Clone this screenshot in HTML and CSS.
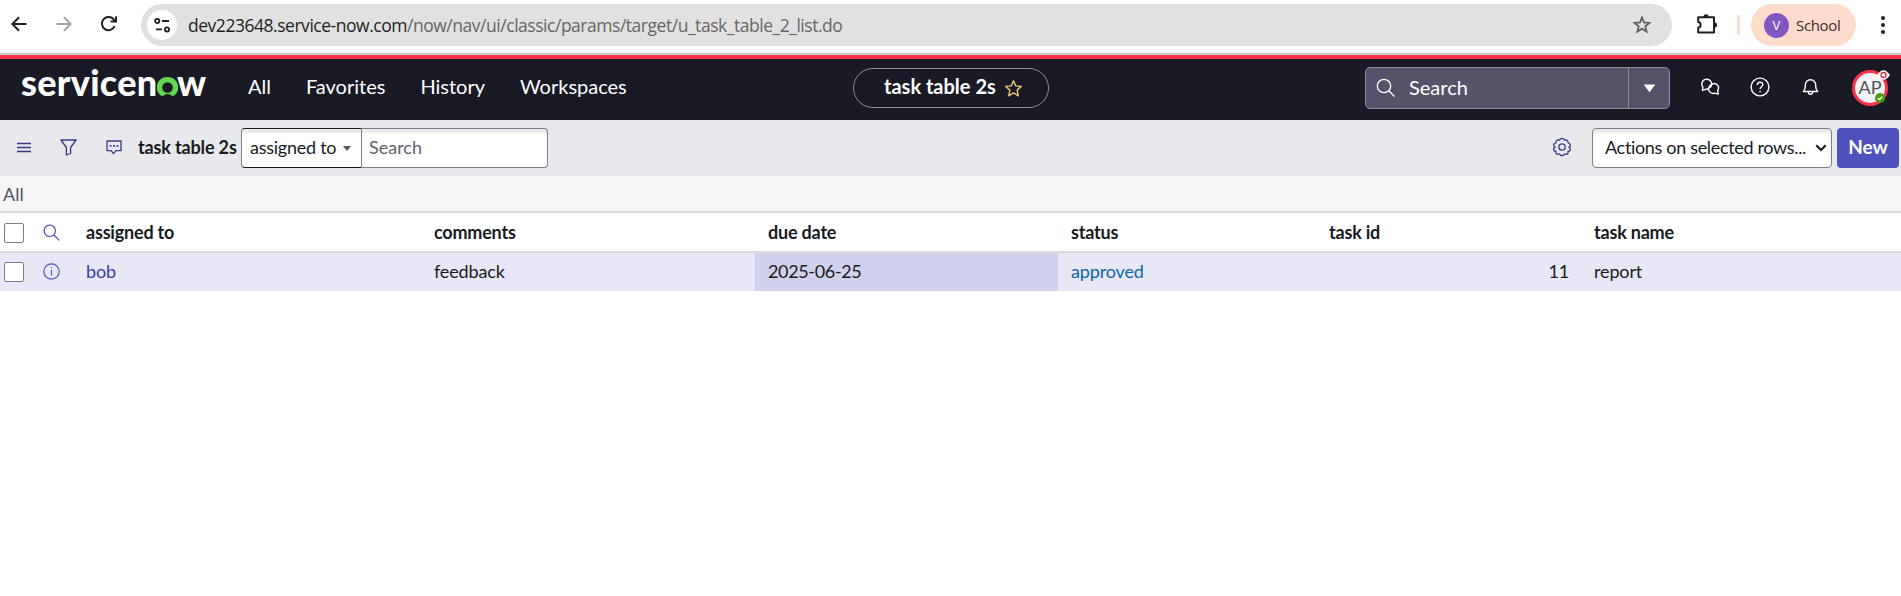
FILE: index.html
```html
<!DOCTYPE html>
<html lang="en">
<head>
<meta charset="utf-8">
<title>task table 2s | ServiceNow</title>
<link rel="stylesheet" href="styles.css">
</head>
<body>
<div class="browser">
  <div class="nav-buttons">
    <svg width="16" height="16" viewBox="0 0 16 16"><path d="M15.5 8H1.5M8 1.3 1.3 8 8 14.7" stroke="#1f1f1f"/></svg>
    <svg width="16" height="16" viewBox="0 0 16 16"><path d="M.5 8h14M8 1.3 14.7 8 8 14.7" stroke="#a3a3a3"/></svg>
    <svg width="16" height="16" viewBox="0 0 16 16"><path d="M13.6 10.2A6.6 6.6 0 1 1 12.7 3.4L14.6 5.4M15 .5V5.6H9.6" stroke="#1f1f1f"/></svg>
  </div>
  <div class="address">
    <span class="site-info"><svg width="17" height="17" viewBox="0 0 17 17"><circle cx="3.2" cy="4" r="2.1"/><path d="M8 4h7M2 12.4h6"/><circle cx="13" cy="12.4" r="2.1"/></svg></span>
    <span class="url">dev223648.service-now.com<span class="path">/now/nav/ui/classic/params/target/u_task_table_2_list.do</span></span>
    <svg class="bookmark" width="20" height="20" viewBox="0 0 20 20"><path d="M10 2.6l2 4.9 5.4.4-4.1 3.5 1.3 5.2-4.6-2.8-4.6 2.8 1.3-5.2L2.6 7.9 8 7.5z"/></svg>
  </div>
  <svg class="puzzle" width="22" height="22" viewBox="0 0 22 22"><path d="M2.200 4.200H18v15.200H2.200v-4.700c3.200-.6 3.200-5 0-5.600V4.200z"/><path class="solid" d="M7.400 4.200a2.700 3 0 0 1 5.400 0zM18 9.200a3 2.700 0 0 1 0 5.400z"/></svg>
  <span class="divider"></span>
  <div class="profile"><span class="initial">V</span><span class="profile-name">School</span></div>
  <svg class="kebab" width="6" height="20" viewBox="0 0 6 20"><circle cx="3" cy="3" r="2"/><circle cx="3" cy="10" r="2"/><circle cx="3" cy="17" r="2"/></svg>
</div>
<header class="header">
  <div class="logo"><span class="logo-a">servicen</span><svg width="21" height="20" viewBox="0 0 21 20"><path d="M10.500 0A10.400 10.400 0 0 0 3.400 18.200Q5.200 19.600 7 18.300Q10.500 15.800 14 18.300Q15.800 19.600 17.600 18.200A10.400 10.400 0 0 0 10.500 0zM10.500 5.200a5.300 5.300 0 1 1 0 10.600a5.300 5.300 0 0 1 0-10.600z" fill="#62d84e" fill-rule="evenodd"/></svg><span class="logo-b">w</span></div>
  <nav class="menu"><a>All</a><a>Favorites</a><a>History</a><a>Workspaces</a></nav>
  <div class="title-pill"><span>task table 2s</span><svg width="19" height="19" viewBox="0 0 19 19"><path d="M9.500 1.800l2.200 5.100 5.600.5-4.200 3.700 1.200 5.700-4.800-2.900-4.800 2.900 1.200-5.700L1.700 7.400l5.600-.5z"/></svg></div>
  <div class="global-search">
    <div class="gs-field"><svg width="20" height="20" viewBox="0 0 20 20"><circle cx="8" cy="8" r="6.700"/><path d="M12.800 12.800l5.700 5.700"/></svg><span>Search</span></div>
    <div class="gs-toggle"><svg width="13" height="9" viewBox="0 0 13 9"><path d="M.7.500h11.600L6.500 8.300z"/></svg></div>
  </div>
  <div class="header-icons">
    <svg width="19" height="18" viewBox="0 0 19 18"><path d="M8.600 10A4.900 4.900 0 1 0 1.800 9L1.500 12.300 4.700 11.300 8 10.600M11 6.200a4.300 4.300 0 0 1 5.700 6.200l.5 3.700-3.500-1a4.500 4.500 0 0 1-5.600-6.300Q9 7 11 6.200"/></svg>
    <svg width="20" height="20" viewBox="0 0 20 20"><circle cx="10" cy="10" r="8.900"/><path d="M7.300 8c0-3.700 5.500-3.700 5.500-.2 0 2-2.700 2-2.700 4.300M10.100 13.700v1.500"/></svg>
    <svg width="17" height="18" viewBox="0 0 17 18"><path d="M1.300 13.500Q3.300 11.500 3.300 8.200V7a5.200 5.200 0 0 1 10.400 0v1.200q0 3.300 2 5.300zM6.200 14c.4 3 4.200 3 4.600 0"/></svg>
  </div>
  <div class="avatar"><span>AP</span>
    <svg class="eye" width="13" height="10" viewBox="0 0 13 10"><path d="M0 5Q6.500-4.500 13 5Q6.500 14.500 0 5z" fill="#fff"/><circle cx="6.500" cy="5" r="2.500" fill="#fff" stroke="#d9213b" stroke-width="1.300"/></svg>
    <svg class="online" width="10" height="10" viewBox="0 0 10 10"><circle cx="5" cy="5" r="5" fill="#4a9e0b"/><path d="M2.800 5.200l1.600 1.500 2.800-3" fill="none" stroke="#fff" stroke-width="1.300"/></svg>
  </div>
</header>
<div class="toolbar">
  <div class="tool-icons">
    <svg width="14" height="11" viewBox="0 0 14 11"><path d="M0 1.500h14M0 5.500h14M0 9.500h14"/></svg>
    <svg width="17" height="17" viewBox="0 0 17 17"><path d="M.9 1h15.200L10.600 8.500v6L6.400 16V8.500z"/></svg>
    <svg width="16" height="15" viewBox="0 0 16 15"><path d="M1 1h14v9.700H10L7.500 13.600 5 10.700H1z"/><path class="dots" d="M3.700 5.900h1.800M7.100 5.900h1.800M10.500 5.900h1.800"/></svg>
  </div>
  <h1>task table 2s</h1>
  <div class="list-search"><div class="field-select"><span>assigned to</span><i></i></div><div class="search-box"><span>Search</span></div></div>
  <svg class="gear" width="20" height="20" viewBox="0 0 20 20"><circle cx="10" cy="10" r="3.200"/><path d="M8.300 2q1.700-1.300 3.400 0l.6 1q1-.1 2-.1 1.800.7 1.900 2.700l-.1.200q.9.800 1.900 1.200.7 1.500-.1 2.500l-.9.700.9.700q.8 1.500 0 2.700-.9.500-1.900 1 .1.900-.1 1.900-1 .9-2.300.7l-1.300-.1-.7 1q-1.600 1-3.200 0l-.7-1-1.300.1q-1.300.2-2.300-.7-.2-1-.1-1.900-1-.5-1.900-1-.8-1.200 0-2.700l.9-.7-.9-.7q-.8-1-.1-2.500 1-.4 1.900-1.200L3.800 5.600q.1-2 1.900-2.700 1 0 2 .1z"/></svg>
  <div class="actions"><span>Actions on selected rows...</span><svg width="12" height="8" viewBox="0 0 12 8"><path d="M1.300 1.300 6 6l4.700-4.700"/></svg></div>
  <button class="new">New</button>
</div>
<div class="crumbs"><span>All</span></div>
<div class="row head">
  <div class="tools"><i class="check"></i><svg width="17" height="17" viewBox="0 0 17 17"><circle cx="6.800" cy="6.800" r="5.700"/><path d="M11 11l5.300 5.300"/></svg></div>
  <div class="c1">assigned to</div><div class="c2">comments</div><div class="c3">due date</div><div class="c4">status</div><div class="c5">task id</div><div class="c6">task name</div>
</div>
<div class="row data">
  <div class="tools"><i class="check"></i><svg width="17" height="17" viewBox="0 0 17 17"><circle cx="8.500" cy="8.500" r="7.700"/><path d="M8.500 7v5.500M8.500 4.200v1.400"/></svg></div>
  <div class="c1">bob</div><div class="c2">feedback</div><div class="c3 hot">2025-06-25</div><div class="c4 link">approved</div><div class="c5 num">11</div><div class="c6">report</div>
</div>
</body>
</html>
```
FILE: styles.css
```css
* { box-sizing: border-box; }
body { margin: 0; background: #fff; color: #181a1f; font: 18px Lato, sans-serif; white-space: nowrap; overflow: hidden; }
svg { display: block; flex: none; fill: none; }

.browser { height: 55px; display: flex; align-items: flex-start; border-bottom: 2px solid #c8c8c8; font-family: "Open Sans", sans-serif; }
.nav-buttons { display: flex; gap: 29px; padding: 16px 0 0 11px; width: 141px; }
.nav-buttons svg { stroke-width: 2; }
.address { width: 1531px; height: 42px; margin-top: 4px; border-radius: 21px; background: #e1e1e1; display: flex; align-items: center; padding-left: 6px; }
.site-info { width: 30px; height: 30px; border-radius: 50%; background: #fff; display: flex; align-items: center; justify-content: center; }
.site-info svg { stroke: #1f1f1f; stroke-width: 1.8; }
.url { margin-left: 11px; font-size: 17.5px; letter-spacing: -0.47px; color: #1f1f1f; width: 1445px; }
.path { color: #666; }
.bookmark { stroke: #5f5f5f; stroke-width: 1.8; margin-left: -1px; }
.puzzle { margin: 13px 0 0 24px; stroke: #1f1f1f; stroke-width: 2; stroke-linejoin: round; }
.puzzle .solid { fill: #1f1f1f; stroke: none; }
.divider { width: 3px; height: 20px; background: #fddccb; margin: 15px 0 0 19px; border-radius: 1px; }
.profile { width: 105px; height: 42px; margin: 4px 0 0 11px; border-radius: 21px; background: #fddccb; display: flex; align-items: center; padding-left: 13px; }
.initial { width: 25px; height: 25px; border-radius: 50%; background: #8056c0; color: #fff; font-size: 13px; line-height: 25px; text-align: center; }
.profile-name { margin-left: 7px; font-size: 15px; letter-spacing: -0.35px; color: #3a2c28; padding-bottom: 1px; }
.kebab { margin: 15px 0 0 24px; fill: #1f1f1f; }

.header { height: 65px; border-top: 4px solid #ff3349; background: #1a1926; color: #fff; display: flex; align-items: flex-start; }
.logo { display: flex; width: 227px; padding-left: 21px; height: 45px; font-size: 36px; line-height: 47px; font-weight: 900; }
.logo-a { width: 136px; letter-spacing: 0.3px; }
.logo svg { margin-top: 18px; }
.logo-b { margin-left: -1px; }
.menu { display: flex; gap: 35px; padding-left: 21px; width: 626px; font-size: 20px; line-height: 55px; }
.title-pill { width: 196px; height: 40px; margin-top: 9px; border: 1px solid #8d8c99; border-radius: 20px; display: flex; align-items: center; padding-left: 30px; font-size: 20px; font-weight: 700; }
.title-pill span { width: 120px; padding-bottom: 4px; }
.title-pill svg { stroke: #e8c37c; stroke-width: 1.4; stroke-linejoin: round; }
.global-search { width: 305px; height: 42px; margin: 8px 0 0 316px; border: 1px solid #8d8c99; border-radius: 5px; background: #55526a; display: flex; }
.gs-field { width: 263px; display: flex; align-items: center; gap: 13px; padding-left: 10px; font-size: 20px; border-right: 1px solid #8d8c99; }
.gs-field span { padding-bottom: 3px; }
.gs-field svg { stroke: #fff; stroke-width: 1.3; }
.gs-toggle { flex: 1; display: flex; align-items: center; justify-content: center; }
.gs-toggle svg { fill: #fff; }
.header-icons { display: flex; align-items: center; gap: 30px; margin: 18px 0 0 31px; height: 20px; }
.header-icons svg { stroke: #fff; stroke-width: 1.4; stroke-linejoin: round; }
.header-icons svg:last-child { margin-left: 2px; }
.avatar { position: relative; width: 36px; height: 36px; margin: 11px 0 0 33px; border: 3px solid #ff3349; border-radius: 50%; background: #f4f4f7; color: #50525d; font-size: 18px; line-height: 29px; text-align: center; }
.eye { position: absolute; right: -5px; top: -3px; }
.online { position: absolute; right: 0; bottom: 0; }

.toolbar { height: 56px; background: #e8e9ed; display: flex; align-items: flex-start; padding-top: 8px; }
.tool-icons { display: flex; align-items: center; gap: 29px; height: 39px; width: 138px; padding-left: 17px; stroke: #3a3786; stroke-width: 1.3; }
.tool-icons svg { stroke-linejoin: round; }
.tool-icons .dots { stroke-width: 1.8; }
h1 { margin: 0; width: 103px; font-size: 18px; line-height: 39px; font-weight: 700; letter-spacing: -0.15px; }
.list-search { display: flex; height: 40px; width: 1311px; }
.field-select { width: 121px; border: 1px solid #181a1f; border-left-color: #7b7d89; border-right-color: #7b7d89; border-radius: 4px 0 0 4px; background: #fff; box-shadow: inset 0 4px #e9eaea; display: flex; align-items: center; padding-left: 8px; }
.field-select span { width: 93px; letter-spacing: -0.25px; padding-bottom: 2px; }
.field-select i { border: 4px solid transparent; border-top: 5px solid #50525d; border-bottom: 0; }
.search-box { width: 186px; border: 1px solid #7b7d89; border-left: 0; border-radius: 0 4px 4px 0; background: #fff; box-shadow: inset 0 4px #e9eaea; padding-left: 7px; line-height: 37px; color: #60626d; }
.gear { margin-top: 9px; stroke: #3a3786; stroke-width: 1.3; }
.actions { width: 240px; height: 40px; margin-left: 20px; border: 1px solid #7b7d89; border-radius: 4px; background: #fff; box-shadow: inset 0 4px #e9eaea; display: flex; align-items: center; padding-left: 12px; }
.actions span { width: 210px; letter-spacing: -0.33px; padding-bottom: 2px; }
.actions svg { stroke: #181a1f; stroke-width: 2.2; }
.new { width: 62px; height: 40px; margin-left: 5px; border: 0; border-radius: 4px; padding: 0 0 3px; background: #4f52bd; color: #fff; font: 700 19px Lato, sans-serif; }

.crumbs { height: 37px; background: #f6f6f8; border-bottom: 2px solid #dadae0; padding-left: 3px; line-height: 37px; color: #50525d; }
.row { display: grid; grid-template-columns: 73px 348px 334px 303px 258px 265px 1fr; }
.row > div { padding-left: 13px; }
.head { height: 40px; line-height: 39px; font-weight: 700; letter-spacing: -0.2px; border-bottom: 2px solid #dadae0; }
.data { height: 38px; line-height: 37px; letter-spacing: -0.15px; background: #e8e7f5; }
.row > .tools { display: flex; align-items: center; gap: 19px; padding-left: 4px; }
.data > .tools { padding-bottom: 1px; }
.check { width: 20px; height: 20px; border: 1px solid #7b7d89; border-radius: 2px; background: #fff; }
.tools svg { stroke: #4f52bd; stroke-width: 1.2; }
.data .hot { background: #d1d1ed; letter-spacing: -0.35px; }
.data .c1 { color: #3c3da5; }
.link { color: #0a66a8; }
.row > .num { text-align: right; padding-right: 12px; }
```
